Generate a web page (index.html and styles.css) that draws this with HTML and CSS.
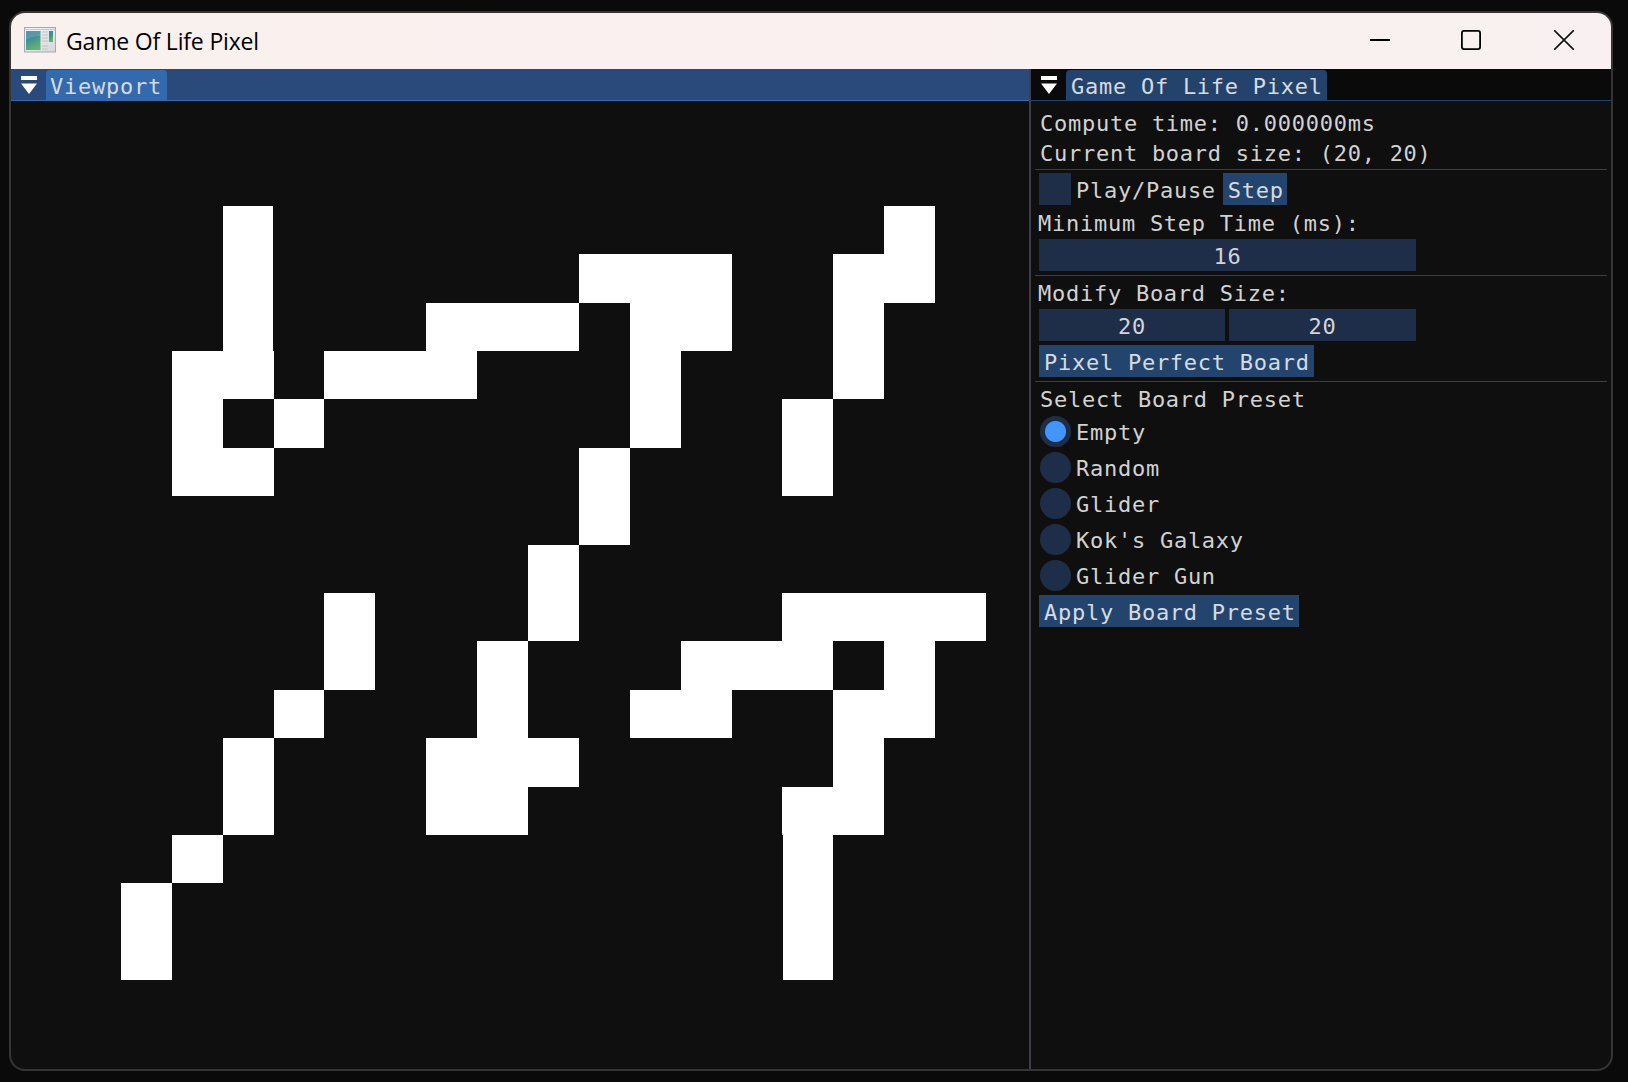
FILE: index.html
```html
<!DOCTYPE html>
<html lang="en">
<head>
<meta charset="utf-8">
<title>Game Of Life Pixel</title>
<link rel="stylesheet" href="styles.css">
</head>
<body>
<div class="window">
  <header class="titlebar">
    <svg class="app-icon" width="32" height="26" viewBox="0 0 32 26">
      <defs>
        <linearGradient id="screen" x1="0" y1="0" x2="0.4" y2="1">
          <stop offset="0" stop-color="#3f7fae"/><stop offset="0.5" stop-color="#3f9296"/><stop offset="1" stop-color="#62b46c"/>
        </linearGradient>
        <linearGradient id="frame" x1="0" y1="0" x2="1" y2="1">
          <stop offset="0" stop-color="#f6f7f8"/><stop offset="1" stop-color="#d4d6d9"/>
        </linearGradient>
      </defs>
      <rect x="0.5" y="0.5" width="31" height="24.500" fill="url(#frame)" stroke="#a3a7af"/>
      <path d="M1 2.500H31" stroke="#c8ccd2"/>
      <rect x="2" y="4" width="14.500" height="19" fill="url(#screen)"/>
      <path d="M2 4H16.500V9Q7 9 2 13Z" fill="#fff" opacity="0.13"/>
      <rect x="25" y="4" width="4" height="11" fill="url(#screen)"/>
      <path d="M18 5H24M18 8H24M18 11H24M18 14H24M18 19H24M18 22H24" stroke="#bfc2c5"/>
    </svg>
    <h1 class="title">Game Of Life Pixel</h1>
    <div class="window-buttons">
      <svg width="20" height="20" viewBox="0 0 20 20"><path d="M0 10H20" stroke="#000" stroke-width="2"/></svg>
      <svg width="20" height="20" viewBox="0 0 20 20"><rect x="0.900" y="0.900" width="18.200" height="18.200" rx="2" fill="none" stroke="#000" stroke-width="1.800"/></svg>
      <svg width="20" height="20" viewBox="0 0 20 20"><path d="M0.500 0.500L19.500 19.500M19.500 0.500L0.500 19.500" stroke="#111" stroke-width="1.600" stroke-linecap="round"/></svg>
    </div>
  </header>
  <main class="dock">
    <section class="viewport">
      <div class="tabbar focused">
        <svg class="collapse" width="16" height="18" viewBox="0 0 16 18"><path d="M0 0H16V4H0ZM0 7.500H16L8 18Z" fill="#fff"/></svg>
        <div class="tab">Viewport</div>
      </div>
      <svg class="board" width="1018" height="968" viewBox="11 101 1018 968" shape-rendering="crispEdges">
        <g fill="#fff">
          <path d="M223 206H273V351H274V399H223V448H274V496H172V351H223Z"/>
          <path d="M274 399H324V448H274Z"/>
          <path d="M324 351H426V303H579V351H477V399H324Z"/>
          <path d="M579 254H732V351H681V448H630V303H579Z"/>
          <path d="M884 206H935V303H884V399H833V254H884Z"/>
          <path d="M782 399H833V496H782Z"/>
          <path d="M579 448H630V545H579Z"/>
          <path d="M528 545H579V641H528Z"/>
          <path d="M477 641H528V738H579V787H528V835H426V738H477Z"/>
          <path d="M324 593H375V690H324Z"/>
          <path d="M274 690H324V738H274Z"/>
          <path d="M223 738H274V835H223Z"/>
          <path d="M172 835H223V883H172Z"/>
          <path d="M121 883H172V980H121Z"/>
          <path d="M782 593H986V641H935V738H884V835H833V980H783V835H782V787H833V690H884V641H833V690H732V738H630V690H681V641H782Z"/>
        </g>
      </svg>
    </section>
    <aside class="panel">
      <div class="tabbar">
        <svg class="collapse" width="16" height="18" viewBox="0 0 16 18"><path d="M0 0H16V4H0ZM0 7.500H16L8 18Z" fill="#fff"/></svg>
        <div class="tab">Game Of Life Pixel</div>
      </div>
      <div class="controls">
        <div class="stat">Compute time: 0.000000ms</div>
        <div class="stat">Current board size: (20, 20)</div>
        <div class="separator"></div>
        <div class="row">
          <div class="checkbox"></div>
          <div class="check-label">Play/Pause</div>
          <div class="button">Step</div>
        </div>
        <div class="caption step-time">Minimum Step Time (ms):</div>
        <div class="fields single"><div class="field">16</div></div>
        <div class="separator"></div>
        <div class="caption">Modify Board Size:</div>
        <div class="fields"><div class="field">20</div><div class="field">20</div></div>
        <div class="row spaced"><div class="button">Pixel Perfect Board</div></div>
        <div class="separator"></div>
        <div class="caption presets">Select Board Preset</div>
        <div class="radios">
          <div class="row"><div class="radio selected"></div>Empty</div>
          <div class="row"><div class="radio"></div>Random</div>
          <div class="row"><div class="radio"></div>Glider</div>
          <div class="row"><div class="radio"></div>Kok's Galaxy</div>
          <div class="row"><div class="radio"></div>Glider Gun</div>
          <div class="row"><div class="button apply">Apply Board Preset</div></div>
        </div>
      </div>
    </aside>
  </main>
</div>
</body>
</html>
```
FILE: styles.css
```css
* { box-sizing: border-box; }
body {
  margin: 0;
  width: 1628px;
  height: 1082px;
  padding: 11px 15px 11px 9px;
  background: #0a0a0a;
  overflow: hidden;
}
.window {
  width: 1604px;
  height: 1060px;
  border: 2px solid #353535;
  border-radius: 16px;
  background: #0f0f0f;
  overflow: hidden;
  display: flex;
  flex-direction: column;
}
.titlebar {
  height: 56px;
  flex: none;
  display: flex;
  align-items: center;
  padding: 0 37px 2px 13px;
  background: linear-gradient(90deg, #f9f1ee, #f9f0f1);
}
.app-icon { flex: none; }
.title {
  margin: 2px 0 0 10px;
  font: 400 23px/30px "Open Sans", "Noto Sans", sans-serif;
  letter-spacing: -0.18px;
  color: #000;
  white-space: nowrap;
}
.window-buttons {
  margin-left: auto;
  display: grid;
  grid-template-columns: 91px 93px 20px;
}
.dock {
  flex: 1;
  display: flex;
  font: 22px/36px "DejaVu Sans Mono", monospace;
  letter-spacing: 0.74px;
  color: #d2d2d2;
}
.viewport {
  width: 1020px;
  border-right: 2px solid #3e3e47;
}
.board { display: block; }
.panel { flex: 1; }
.tabbar {
  height: 32px;
  display: flex;
  align-items: flex-end;
  padding-left: 10px;
  background: #0a0a0a;
  border-bottom: 1px solid #23436c;
}
.collapse { margin-bottom: 6px; flex: none; }
.tab {
  height: 30px;
  margin-left: 9px;
  padding: 0 4px 0 5px;
  border-radius: 4px 4px 0 0;
  background: #23436c;
  line-height: 33px;
  color: #d5dbe2;
  white-space: nowrap;
}
.focused { background: #294a7a; border-color: #3369ad; }
.focused .tab { padding: 0 5px 0 4px; background: #3369ad; }
.controls {
  display: flex;
  flex-direction: column;
  padding: 7px 4px 0 8px;
  white-space: nowrap;
}
.stat { height: 30px; line-height: 31px; padding-left: 1px; }
.separator {
  height: 1px;
  flex: none;
  margin: 4px 0 0 -4px;
  background: #3e3e47;
}
.stat + .separator { margin: 1px 0 3px -4px; }
.row { display: flex; height: 32px; }
.spaced { margin-top: 4px; }
.checkbox {
  width: 32px;
  background: #1e2e48;
}
.check-label { margin: 0 7px 0 5px; }
.button {
  height: 32px;
  padding: 0 4px 0 5px;
  background: #23456d;
  color: #d5dbe2;
}
.button.apply { padding-right: 3px; }
.check-label + .button { padding: 0 3px 0 5px; }
.caption { height: 33px; line-height: 35px; text-indent: -1px; }
.step-time { height: 34px; line-height: 38px; }
.presets { text-indent: 1px; }
.fields {
  display: grid;
  grid-template-columns: 186px 187px;
  gap: 4px;
  width: 377px;
  height: 32px;
}
.single { grid-template-columns: 377px; }
.field {
  height: 32px;
  background: #1e2e48;
  text-align: center;
  color: #d2d5da;
}
.radios {
  display: flex;
  flex-direction: column;
  gap: 4px;
}
.radio {
  width: 31px;
  height: 31px;
  margin: 0.5px 5.5px 0 0.5px;
  border-radius: 50%;
  background: #1e2e48;
}
.selected {
  background: radial-gradient(circle, #4296fa 10px, #1e2e48 11px);
}
```
